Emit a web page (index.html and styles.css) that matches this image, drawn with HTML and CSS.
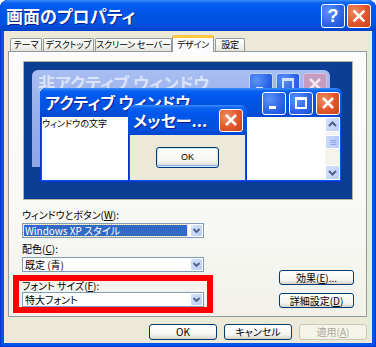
FILE: index.html
```html
<!DOCTYPE html>
<html lang="ja">
<head>
<meta charset="utf-8">
<title>画面のプロパティ</title>
<link rel="stylesheet" href="styles.css">
</head>
<body>
<div class="win">
  <div class="titlebar">
    <span class="title">画面のプロパティ</span>
    <div class="caps">
      <div class="cap help">?</div>
      <div class="cap close"><svg viewBox="0 0 24 24" width="24" height="24"><path d="M7 7L17 17M17 7L7 17" stroke="#fff" stroke-width="2.6" stroke-linecap="square"/></svg></div>
    </div>
  </div>
  <div class="client">
    <div class="tabs">
      <div class="tab w1">テーマ</div>
      <div class="tab w2">デスクトップ</div>
      <div class="tab w3">スクリーン セーバー</div>
      <div class="tab active">デザイン</div>
      <div class="tab w5">設定</div>
    </div>
    <div class="panel">
      <div class="preview">
        <div class="pwin inactive">
          <div class="ptitle">
            <span class="ptext">非アクティブ ウィンドウ</span>
            <div class="pcaps">
              <div class="pcap min"><i></i></div>
              <div class="pcap max"><i></i></div>
              <div class="pcap x"><svg viewBox="0 0 24 23" width="24" height="23"><path d="M7 6L17 16M17 6L7 16" stroke="#F4E6EE" stroke-width="2.6"/></svg></div>
            </div>
          </div>
        </div>
        <div class="pwin active-w">
          <div class="ptitle">
            <span class="ptext">アクティブ ウィンドウ</span>
            <div class="pcaps">
              <div class="pcap min"><i></i></div>
              <div class="pcap max"><i></i></div>
              <div class="pcap x"><svg viewBox="0 0 24 23" width="24" height="23"><path d="M7 6L17 16M17 6L7 16" stroke="#fff" stroke-width="2.6"/></svg></div>
            </div>
          </div>
          <div class="pbody">
            <span class="ptxt">ウィンドウの文字</span>
            <div class="sbar">
              <div class="sbtn"><svg viewBox="0 0 15 15" width="15" height="15"><path d="M4 9L7.5 5.5L11 9" fill="none" stroke="#4D6185" stroke-width="2"/></svg></div>
              <div class="sthumb"><i></i><i></i><i></i></div>
              <div class="sfill"></div>
              <div class="sbtn"><svg viewBox="0 0 15 15" width="15" height="15"><path d="M4 6L7.5 9.5L11 6" fill="none" stroke="#4D6185" stroke-width="2"/></svg></div>
            </div>
          </div>
        </div>
        <div class="pwin msg">
          <div class="ptitle">
            <span class="ptext">メッセー...</span>
            <div class="pcaps">
              <div class="pcap x"><svg viewBox="0 0 24 23" width="24" height="23"><path d="M7 6L17 16M17 6L7 16" stroke="#fff" stroke-width="2.6"/></svg></div>
            </div>
          </div>
          <div class="mbody">
            <div class="mok">OK</div>
          </div>
        </div>
      </div>
      <div class="settings">
        <div class="fields">
          <div class="field f1">
            <label class="lbl">ウィンドウとボタン(<u>W</u>):</label>
            <div class="combo"><span class="val sel"><span>Windows XP スタイル</span></span><span class="arrow"><svg viewBox="0 0 13 13" width="13" height="13"><path d="M3.5 5L6.5 8L9.5 5" fill="none" stroke="#4D6185" stroke-width="1.8"/></svg></span></div>
          </div>
          <div class="field f2">
            <label class="lbl">配色(<u>C</u>):</label>
            <div class="combo"><span class="val">既定 (青)</span><span class="arrow"><svg viewBox="0 0 13 13" width="13" height="13"><path d="M3.5 5L6.5 8L9.5 5" fill="none" stroke="#4D6185" stroke-width="1.8"/></svg></span></div>
          </div>
          <div class="field f3 mark">
            <label class="lbl">フォント サイズ(<u>F</u>):</label>
            <div class="combo"><span class="val">特大フォント</span><span class="arrow"><svg viewBox="0 0 13 13" width="13" height="13"><path d="M3.5 5L6.5 8L9.5 5" fill="none" stroke="#4D6185" stroke-width="1.8"/></svg></span></div>
          </div>
        </div>
        <div class="side">
          <div class="btn">効果(<u>E</u>)...</div>
          <div class="btn">詳細設定(<u>D</u>)</div>
        </div>
      </div>
    </div>
    <div class="footer">
      <div class="btn fb">OK</div>
      <div class="btn fb">キャンセル</div>
      <div class="btn fb disabled">適用(<u>A</u>)</div>
    </div>
  </div>
</div>
</body>
</html>
```
FILE: styles.css
```css
* { box-sizing: border-box; margin: 0; padding: 0; }
html, body { width: 376px; height: 347px; overflow: hidden; background: #fff; }
body {
  font-family: "Liberation Sans", "Noto Sans CJK JP", sans-serif;
  font-feature-settings: "palt";
  font-size: 10px;
  color: #000;
}
.win {
  width: 376px; height: 347px;
  display: flex; flex-direction: column;
  background: #0055E5;
  border-radius: 8px 8px 0 0;
  box-shadow: inset 1px 0 0 #0831D9, inset -1px 0 0 #0831D9, inset 0 -1px 0 #0831D9;
  overflow: hidden;
}
.titlebar {
  height: 31px; flex: none;
  display: flex; align-items: center; justify-content: space-between;
  padding: 0 5px 0 6px;
  background: linear-gradient(#3C8EFB 0, #0A62F0 3px, #0058EE 8px, #0055E5 45%, #0053E1 75%, #0049D4 92%, #0040C4 100%);
  border-radius: 8px 8px 0 0;
}
.title {
  color: #fff; font-weight: bold; font-size: 17px; line-height: 20px;
  font-family: "Noto Sans CJK JP", sans-serif;
  text-shadow: 1px 1px 0 #0F1C8F;
  margin-top: 1px;
}
.caps { display: flex; gap: 2px; }
.cap {
  width: 24px; height: 24px;
  border: 1px solid #fff; border-radius: 3px;
  display: flex; align-items: center; justify-content: center;
}
.cap.help {
  background: radial-gradient(circle at 30% 30%, #5C93FA, #2A64E6 60%, #1E4FD3);
  color: #fff; font: bold 18px/1 "Liberation Sans", sans-serif;
}
.cap.close { background: radial-gradient(circle at 30% 30%, #F08A62, #E2562B 55%, #C7401C); }
.cap svg { display: block; }

.client {
  flex: 1; margin: 0 4px 4px;
  background: #ECE9D8;
  display: flex; flex-direction: column;
}
.tabs {
  height: 21px; flex: none;
  display: flex; align-items: flex-end;
  padding-left: 6px;
  margin-bottom: -1px;
  position: relative; z-index: 2;
}
.tab {
  height: 13px; margin-bottom: 1px;
  border: 1px solid #919B9C; border-bottom: none;
  border-radius: 2px 2px 0 0;
  background: linear-gradient(#FFFFFF, #F3F3EF 60%, #E4E2DA);
  font-family: "Noto Sans CJK JP", sans-serif;
  font-size: 9px; line-height: 12px; letter-spacing: -0.2px;
  text-align: center; white-space: nowrap;
  margin-right: 1px;
}
.tab.w1 { width: 32px; }
.tab.w2 { width: 51px; }
.tab.w3 { width: 77px; margin-right: 0; }
.tab.w5 { width: 30px; }
.tab.active {
  width: 42px; height: 17px; margin-bottom: 0;
  background: #FCFCFE;
  border-top: 3px solid #FFC83C;
  line-height: 13px;
  margin-right: 1px;
}
.panel {
  height: 266px; flex: none;
  margin: 0 5px 0 4px;
  border: 1px solid #919B9C;
  background: linear-gradient(#FCFCFE, #F7F7F3 70%, #F2F1EA);
  display: flex; flex-direction: column;
}
.preview {
  position: relative;
  width: 330px; height: 139px;
  margin: 9px 0 0 14px;
  background: #0C3E94;
  border: 1px solid #B9B29D;
  overflow: hidden;
}
.pwin {
  position: absolute;
  border-radius: 6px 6px 0 0;
  display: flex; flex-direction: column;
  overflow: hidden;
}
.ptitle {
  height: 29px; flex: none;
  display: flex; justify-content: space-between; align-items: flex-start;
  padding: 4px 2px 0 5px;
}
.ptext {
  font-family: "Noto Sans CJK JP", sans-serif;
  font-weight: bold; font-size: 16px; line-height: 20px;
  white-space: nowrap; color: #fff;
}
.pcaps { display: flex; gap: 3px; }
.pcap {
  width: 24px; height: 23px;
  border: 1px solid #fff; border-radius: 3px;
  position: relative;
}
.pcap svg { position: absolute; left: -1px; top: -1px; }
.pcap.min i { position: absolute; left: 6px; bottom: 5px; width: 7px; height: 3px; background: #fff; }
.pcap.max i { position: absolute; left: 5px; top: 4px; width: 12px; height: 12px; border: 2px solid #fff; border-top-width: 3px; }

.inactive {
  left: 8px; top: 8px; width: 298px; height: 97px;
  background: linear-gradient(#A9BEF1, #9BB2EC 30%, #8EA6E6);
}
.inactive .ptitle { padding: 3px 3px 0 6px; }
.inactive .ptext { color: #D9E3FA; font-size: 17px; }
.inactive .pcap { border-color: #C3D2F5; background: #8FA8EA; }
.inactive .pcap i { background: #D4DEF8 !important; }
.inactive .pcap.max i { background: transparent !important; border-color: #D4DEF8; }
.inactive .pcap.x { background: #C69CC0; border-color: #D9C3DA; }

.active-w, .msg {
  background: #0055E5;
  box-shadow: inset 0 0 0 1px #0831D9;
}
.active-w .ptitle, .msg .ptitle {
  background: linear-gradient(#3C8EFB 0, #0A62F0 3px, #0058EE 8px, #0055E5 45%, #0050DD 80%, #0046D0);
}
.active-w { left: 16px; top: 26px; width: 302px; height: 94px; }
.active-w .ptext { font-size: 16px; text-shadow: 1px 1px 0 #0F1C8F; }
.pcap.min, .pcap.max { background: radial-gradient(circle at 30% 30%, #5C93FA, #2A64E6 60%, #1E4FD3); }
.pcap.x { background: radial-gradient(circle at 30% 30%, #F08A62, #E2562B 55%, #C7401C); }
.pbody {
  flex: 1; margin: 0 2px 2px;
  background: #fff;
  display: flex; justify-content: space-between;
}
.ptxt {
  font-family: "Noto Sans CJK JP", sans-serif;
  font-size: 9px; line-height: 11px; padding: 1px 0 0 0;
}
.sbar {
  width: 15px; display: flex; flex-direction: column;
  background: #F4F3EE;
}
.sbtn {
  width: 15px; height: 15px;
  background: linear-gradient(135deg, #D5E1FC, #BCCEF8);
  border: 1px solid #fff; border-radius: 2px;
  position: relative;
}
.sbtn svg { position: absolute; left: -1px; top: -1px; }
.sthumb {
  margin-top: 3px; height: 14px;
  background: linear-gradient(to right, #CAD8FB, #B7CBF8);
  border: 1px solid #fff; border-radius: 2px;
  display: flex; flex-direction: column; align-items: center; justify-content: center; gap: 1px;
}
.sthumb i { display: block; width: 6px; height: 1px; background: #8BA6E8; }
.sfill { flex: 1; }

.msg { left: 104px; top: 43px; width: 119px; height: 77px; }
.msg .ptitle { height: 30px; padding: 4px 4px 0 5px; }
.msg .ptext { font-size: 16px; text-shadow: 1px 1px 0 #0F1C8F; line-height: 22px; }
.mbody {
  flex: 1; margin: 0 2px 2px;
  background: #ECE9D8;
  padding: 12px 0 0 26px;
}
.mok {
  width: 63px; height: 21px;
  border: 1px solid #003C74; border-radius: 3px;
  background: linear-gradient(#FFFFFF, #F4F4F0 70%, #D6D0C5);
  box-shadow: inset 0 0 0 1px #CEE7FF, inset 0 -1px 0 1px #89ADE4;
  font-size: 9px; line-height: 19px; text-align: center;
}

.settings {
  display: flex; justify-content: space-between;
  padding: 0 12px 0 13px;
}
.fields { display: flex; flex-direction: column; width: 182px; }
.field { display: flex; flex-direction: column; }
.f1 { margin-top: 8px; }
.f2 { margin-top: 4px; }
.f3 { margin-top: 3px; }
.lbl {
  font-family: "Noto Sans CJK JP", sans-serif;
  font-size: 10px; line-height: 13px; height: 13px;
  margin-bottom: 2px; white-space: nowrap;
}
.mark {
  margin-left: -9px; width: 200px;
  border: 6px solid #FF0000;
  padding: 0 3px;
}
.mark .lbl { height: 11px; line-height: 10px; margin-bottom: 0; }
.combo {
  width: 182px; height: 15px;
  border: 1px solid #7F9DB9;
  background: #fff;
  display: flex; align-items: stretch;
}
.val {
  flex: 1; padding-left: 2px;
  font-family: "Noto Sans CJK JP", sans-serif;
  font-size: 10px; line-height: 13px; white-space: nowrap;
}
.val.sel { padding: 1px 2px 1px 1px; }
.val.sel span {
  display: block; height: 11px;
  background: #316AC5; color: #fff;
  outline: 1px dotted #E9D77C;
  line-height: 11px; padding-left: 1px;
}
.arrow {
  width: 13px; flex: none;
  margin: 0 0 0 1px;
  background: linear-gradient(135deg, #D7E3FD, #B9CCF8);
  border: 1px solid #fff; border-radius: 2px;
  position: relative;
}
.arrow svg { position: absolute; left: -1px; top: -1px; }
.side { display: flex; flex-direction: column; gap: 8px; margin-top: 70px; }
.btn {
  height: 15px;
  border: 1px solid #003C74; border-radius: 3px;
  background: linear-gradient(#FFFFFF, #F4F4F0 70%, #D6D0C5);
  font-family: "Noto Sans CJK JP", sans-serif;
  font-size: 10px; line-height: 13px; text-align: center; white-space: nowrap;
}
.side .btn { width: 75px; }
.footer {
  display: flex; justify-content: flex-end; gap: 7px;
  margin-top: 7px; padding-right: 5px;
}
.btn.fb { width: 68px; height: 16px; line-height: 14px; }
.btn.disabled {
  border-color: #C9C7BA; color: #ACA899;
  background: #F5F4EA;
}
u { text-decoration: underline; }
```
